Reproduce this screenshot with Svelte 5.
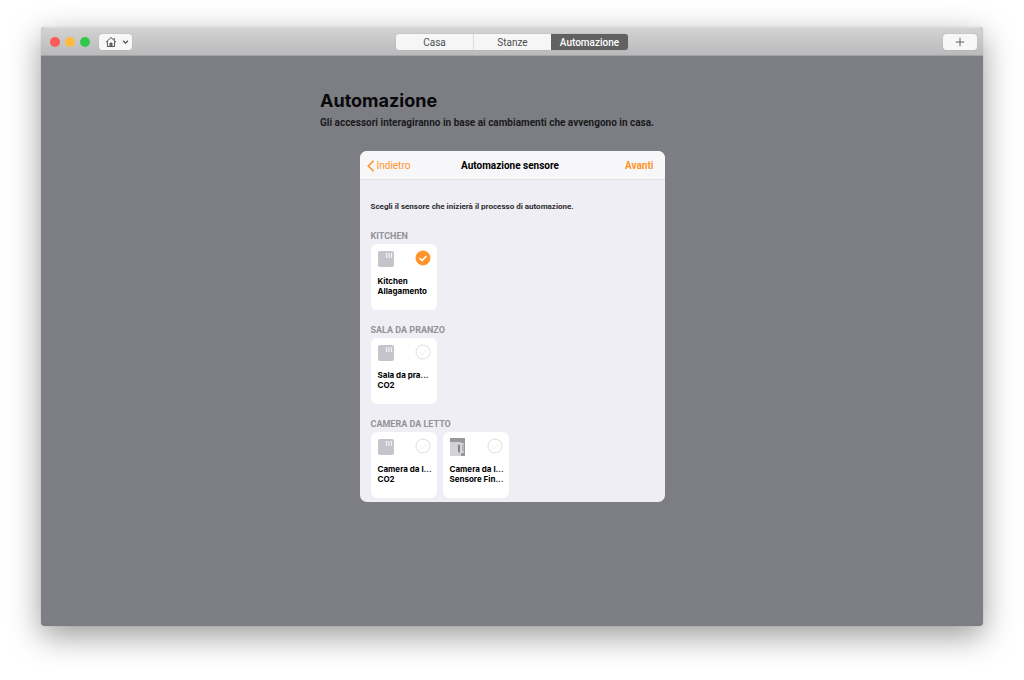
<script lang="ts">
	interface Sensor {
		id: string
		room: string
		name: string
		icon: 'sensor' | 'window'
	}
	interface Group {
		title: string
		sensors: Array<Sensor>
	}

	const tabs = ['Casa', 'Stanze', 'Automazione']
	const groups: Array<Group> = [
		{
			title: 'Kitchen',
			sensors: [{ id: 'kitchen-water', room: 'Kitchen', name: 'Allagamento', icon: 'sensor' }],
		},
		{
			title: 'Sala da pranzo',
			sensors: [{ id: 'dining-co2', room: 'Sala da pra...', name: 'CO2', icon: 'sensor' }],
		},
		{
			title: 'Camera da letto',
			sensors: [
				{ id: 'bedroom-co2', room: 'Camera da l...', name: 'CO2', icon: 'sensor' },
				{ id: 'bedroom-window', room: 'Camera da l...', name: 'Sensore Fin...', icon: 'window' },
			],
		},
	]

	let activeTab = $state('Automazione')
	let selected = $state('kitchen-water')
</script>

<div class="desktop">
	<div class="window">
		<header class="titlebar">
			<div class="titlebar-left">
				<div class="lights">
					<button class="light light--close" aria-label="Chiudi"></button>
					<button class="light light--minimize" aria-label="Riduci"></button>
					<button class="light light--zoom" aria-label="Ingrandisci"></button>
				</div>
				<button class="tool tool--home" aria-label="Scegli casa">
					<svg width="12" height="12" viewBox="0 0 12 12" fill="none" stroke="#505052">
						<path d="M1 6.2 6 1.5l5 4.7" stroke-width="1" />
						<path d="M9.2 4.2V2" stroke-width="1" />
						<path d="M2.4 5.4v5.1h7.2V5.4" stroke-width="1" />
						<path d="M4.9 10.5V7h2.2v3.5z" fill="#6a6a6c" stroke-width="0.7" />
					</svg>
					<svg width="7" height="6" viewBox="0 0 7 6" fill="none" stroke="#58585a">
						<path d="m1 1.7 2.5 2.3L6 1.7" stroke-width="1.3" />
					</svg>
				</button>
			</div>
			<nav class="tabs">
				{#each tabs as tab}
					<button class="tab" class:tab--active={tab === activeTab} onclick={() => (activeTab = tab)}>
						{tab}
					</button>
				{/each}
			</nav>
			<div class="titlebar-right">
				<button class="tool tool--add" aria-label="Aggiungi">
					<svg width="10" height="10" viewBox="0 0 10 10" stroke="#606062" stroke-width="1">
						<path d="M5 0.8v8.4M0.8 5h8.4" />
					</svg>
				</button>
			</div>
		</header>

		<main class="content">
			<h1>Automazione</h1>
			<p class="intro">Gli accessori interagiranno in base ai cambiamenti che avvengono in casa.</p>

			<section class="sheet">
				<div class="sheet-header">
					<button class="link link--back">
						<svg width="8" height="12" viewBox="0 0 8 12" fill="none" stroke="#ff9429">
							<path d="M6.6 0.8 1.3 6l5.3 5.2" stroke-width="1.6" />
						</svg>
						Indietro
					</button>
					<h2>Automazione sensore</h2>
					<button class="link link--next">Avanti</button>
				</div>

				<div class="sheet-body">
					<p class="hint">Scegli il sensore che inizierà il processo di automazione.</p>
					{#each groups as group}
						<fieldset class="group">
							<legend>{group.title}</legend>
							<div class="tiles">
								{#each group.sensors as sensor}
									<label class="tile">
										<span class="tile-top">
											{#if sensor.icon === 'sensor'}
												<svg width="16" height="18" viewBox="0 0 16 18">
													<rect y="1" width="16" height="16" rx="2" fill="#c5c4ca" />
													<path d="M8.5 3v5M11 3v5M13.5 3v5" stroke="#f1f1f4" stroke-width="1.3" />
												</svg>
											{:else}
												<svg width="16" height="18" viewBox="0 0 16 18">
													<path d="M0 0h15v18h-4V4H0z" fill="#98989a" />
													<path d="M0 4h11v14H0z" fill="#d3d3d6" />
													<path d="M11 5h2.5v10H11z" fill="#dcdcde" />
													<path d="M12.5 7v6" stroke="#aaaaac" />
													<rect x="8" y="6.5" width="2" height="8" rx="0.8" fill="#858587" />
												</svg>
											{/if}
											<input
												type="radio"
												name="sensor"
												value={sensor.id}
												bind:group={selected}
											/>
											<svg class="check" width="16" height="16" viewBox="0 0 16 16">
												<circle cx="8" cy="8" r="7" />
												<path d="m4.6 8.1 2.4 2.5 4.4-4.7" />
											</svg>
										</span>
										<span class="tile-name">{sensor.room}<br />{sensor.name}</span>
									</label>
								{/each}
							</div>
						</fieldset>
					{/each}
				</div>
			</section>
		</main>
	</div>
</div>

<style>
	:global(body) {
		margin: 0;
		background: #fff;
	}
	.desktop {
		display: flex;
		box-sizing: border-box;
		padding: 27px 41px 54px;
		min-height: 100vh;
		color: #000;
		font-family: Roboto, 'Liberation Sans', sans-serif;
	}
	button {
		margin: 0;
		border: 0;
		padding: 0;
		font-family: inherit;
	}
	.window {
		display: flex;
		flex: 1;
		flex-direction: column;
		border-radius: 4px;
		box-shadow:
			0 10px 32px rgba(0, 0, 0, 0.4),
			0 0 1px rgba(0, 0, 0, 0.3);
		background: #7d7e83;
		overflow: hidden;
	}

	.titlebar {
		display: grid;
		grid-template-columns: 1fr auto 1fr;
		align-items: center;
		box-sizing: border-box;
		border-top: 1px solid #dedede;
		border-bottom: 1px solid #a3a3a5;
		background: linear-gradient(#d3d3d4, #bababc);
		padding: 0 6px;
		height: 29px;
	}
	.titlebar-left {
		display: flex;
		align-items: center;
		gap: 9px;
		padding-left: 3px;
	}
	.titlebar-right {
		display: flex;
		justify-content: flex-end;
	}
	.lights {
		display: flex;
		gap: 5px;
	}
	.light {
		border-radius: 50%;
		width: 10px;
		height: 10px;
	}
	.light--close {
		background: #fc5b57;
	}
	.light--minimize {
		background: #fdbc40;
	}
	.light--zoom {
		background: #34c84a;
	}
	.tool {
		display: flex;
		align-items: center;
		justify-content: center;
		border-radius: 3px;
		box-shadow: 0 0 1px rgba(0, 0, 0, 0.3);
		background: #f7f7f7;
		height: 16px;
	}
	.tool--home {
		gap: 5px;
		padding-left: 2px;
		width: 33px;
	}
	.tool--add {
		width: 34px;
	}
	.tabs {
		display: grid;
		grid-template-columns: 77px 78px 77px;
		border-radius: 3px;
		box-shadow: 0 0 1px rgba(0, 0, 0, 0.3);
		overflow: hidden;
	}
	.tab {
		box-sizing: border-box;
		background: #f6f6f6;
		padding-top: 2px;
		height: 16px;
		color: #4c4c4e;
		font-size: 10px;
		line-height: 14px;
	}
	.tab:nth-child(2) {
		border-left: 1px solid #dcdcdc;
	}
	.tab--active {
		background: #616162;
		color: #fff;
		font-weight: 500;
	}

	.content {
		align-self: center;
		padding: 34px 0;
		width: 384px;
		max-width: 100%;
	}
	h1 {
		margin: 0;
		color: #08080a;
		font-weight: 700;
		font-size: 18px;
		font-family: Inter, 'Liberation Sans', sans-serif;
		line-height: 22px;
	}
	.intro {
		margin: 4px 0 21px;
		color: #1a1a1d;
		font-weight: 700;
		font-size: 10px;
		line-height: 14px;
	}

	.sheet {
		margin: 0 auto;
		border-radius: 7px;
		background: #efeef4;
		max-width: 305px;
		overflow: hidden;
	}
	.sheet-header {
		display: grid;
		grid-template-columns: 1fr auto 1fr;
		align-items: center;
		box-sizing: border-box;
		border-bottom: 1px solid #e0dfe4;
		background: #f7f7f9;
		padding: 2px 11px 0 7px;
		height: 29px;
	}
	h2 {
		margin: 0;
		font-weight: 700;
		font-size: 10px;
		line-height: 14px;
	}
	.link {
		background: none;
		color: #ff9429;
		font-size: 10px;
		line-height: 14px;
	}
	.link--back {
		display: flex;
		align-items: center;
		justify-self: start;
		gap: 2px;
	}
	.link--next {
		justify-self: end;
		font-weight: 700;
	}

	.sheet-body {
		padding: 21px 11px 4px;
	}
	.hint {
		margin: 0 0 17px;
		color: #2c2c2f;
		font-weight: 700;
		font-size: 8px;
		line-height: 12px;
	}
	.group {
		margin: 0 0 14px;
		border: 0;
		padding: 0;
		min-width: 0;
	}
	.group:last-child {
		margin-bottom: 0;
	}
	legend {
		padding: 0 0 2px;
		color: #939297;
		font-weight: 700;
		font-size: 9px;
		line-height: 12px;
		text-transform: uppercase;
	}
	.tiles {
		display: flex;
		flex-wrap: wrap;
		gap: 6px;
	}
	.tile {
		box-sizing: border-box;
		border-radius: 6px;
		background: #fff;
		padding: 6px 6px 0 7px;
		width: 66px;
		height: 66px;
	}
	.tile-top {
		display: flex;
		justify-content: space-between;
		margin-bottom: 8px;
	}
	.tile input {
		position: absolute;
		opacity: 0;
		margin: 0;
		width: 1px;
		height: 1px;
	}
	.check {
		fill: #fff;
		stroke: #dddce2;
		stroke-width: 1;
	}
	.check path {
		fill: none;
		stroke: #fdf6ec;
		stroke-width: 1.5;
	}
	input:checked + .check circle {
		fill: #ff9429;
		stroke: #ff9429;
	}
	input:checked + .check path {
		stroke: #fff;
	}
	input:focus-visible + .check circle {
		stroke: #ff9429;
	}
	.tile-name {
		display: block;
		font-weight: 700;
		font-size: 8px;
		font-family: Inter, 'Liberation Sans', sans-serif;
		line-height: 10px;
		white-space: nowrap;
	}
</style>
